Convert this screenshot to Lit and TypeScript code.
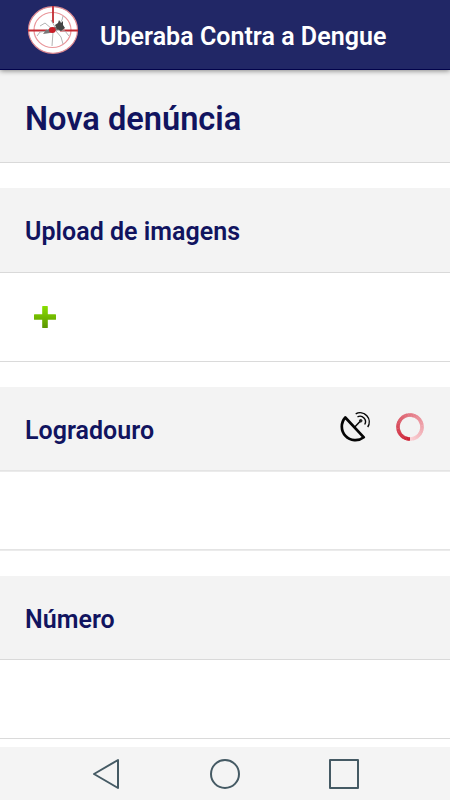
import { LitElement, html, css, svg } from "lit";
import { customElement } from "lit/decorators.js";

const arc = (i: number, n: number) => {
  const start = Math.PI / 2 + (i / n) * 2 * Math.PI;
  const end = start + (2 * Math.PI) / n + (i < n - 1 ? 0.03 : 0);
  const p = (a: number) => `${(15 + 12 * Math.cos(a)).toFixed(2)} ${(15 + 12 * Math.sin(a)).toFixed(2)}`;
  const t = i / (n - 1);
  const mix = (a: number, b: number) => Math.round(a + (b - a) * t);
  return svg`<path d="M${p(start)}A12 12 0 0 1 ${p(end)}" stroke="rgb(${mix(205, 250)},${mix(32, 208)},${mix(52, 212)})"/>`;
};

@customElement("app-root")
export class AppRoot extends LitElement {
  static styles = css`
    :host {
      display: flex;
      flex-direction: column;
      width: 450px;
      height: 800px;
      overflow: hidden;
      background: #fff;
      font-family: Roboto, sans-serif;
      color: #11145f;
    }
    * { box-sizing: border-box; }
    svg { display: block; flex: none; fill: none; overflow: visible; }
    h1, h2, h3 { margin: 0; font-weight: 600; white-space: nowrap; }
    .bar {
      position: relative;
      z-index: 1;
      flex: none;
      height: 70px;
      display: flex;
      padding-left: 27px;
      background: #212766;
      border-bottom: 1px solid #02034b;
      box-shadow: 0 1px 5px rgba(0, 0, 0, 0.45);
      color: #fff;
    }
    .logo { margin-top: 5px; }
    .brand { margin-left: 21px; line-height: 30px; padding-top: 22px; font-size: 25px; letter-spacing: 0.03px; }
    .title {
      flex: none;
      height: 93px;
      padding: 29px 25px 0;
      background: #f3f3f3;
      border-bottom: 1px solid #d9d9d9;
      line-height: 40px;
      font-size: 32.6px;
    }
    .card { flex: none; margin-top: 25px; border-bottom: 1px solid #dadada; }
    .head {
      height: 85px;
      display: flex;
      justify-content: space-between;
      padding: 0 25px;
      background: #f3f3f3;
      border-bottom: 1px solid #d9d9d9;
    }
    .field .head { height: 84px; }
    .head h3 { padding-top: 29px; line-height: 30px; font-size: 25px; letter-spacing: 0.02px; }
    .icons { display: flex; gap: 23px; padding-top: 25px; }
    .body { height: 78px; }
    .split, .split .head { border-bottom-color: #e4e4e4; box-shadow: 0 1px 0 #ebebeb; }
    .images { height: 88px; padding: 32px 0 0 33px; }
    .last { margin-top: 26px; }
    .nav {
      flex: none;
      margin-top: auto;
      height: 53px;
      display: flex;
      justify-content: space-between;
      padding: 10px 90px 0 91px;
      background: #f4f4f4;
    }
  `;

  render() {
    return html`
      <header class="bar">
        <svg class="logo" width="52" height="50" viewBox="0 0 52 50">
          <ellipse cx="26" cy="25" rx="24.5" ry="23.3" fill="#fff" stroke="#dc8890" stroke-width="1.2"/>
          <ellipse cx="25.5" cy="25" rx="18.5" ry="17.5" stroke="#e99599" stroke-width="1.2"/>
          <path d="M26 1v17M1 25.5h19M33 25.5h18" stroke="#c32b32" stroke-width="1.8"/>
          <path d="M25 24 18 18l-5 3M21 26l-8 1-3 4M26 27l-1 14M29 26l5 6 2 7M30 25l8 1 4 5M30 22l5-7 1-4M28 22l-4-7" stroke="#aaa" stroke-width="0.9"/>
          <path d="M16 29 19 25l9-3 7-1-4 4-8 3z" fill="#777"/>
          <path d="m28 20 3-2 1-3 2 3 2-2v4l2 3-4 3-4-2z" fill="#444"/>
          <ellipse cx="25.3" cy="25" rx="3.4" ry="3" fill="#c91e28"/>
        </svg>
        <h1 class="brand">Uberaba Contra a Dengue</h1>
      </header>
      <h2 class="title">Nova denúncia</h2>
      <section class="card">
        <div class="head"><h3>Upload de imagens</h3></div>
        <div class="images">
          <svg width="24" height="24" viewBox="0 0 24 24">
            <defs><linearGradient id="leaf" x1="0" y1="0" x2="0" y2="1">
              <stop stop-color="#89df00"/><stop offset="1" stop-color="#5b9500"/>
            </linearGradient></defs>
            <path d="M9.8 1h4.4q.6 0 .6.6v7.6h7.6q.6 0 .6.6v4.4q0 .6-.6.6h-7.6v7.6q0 .6-.6.6H9.8q-.6 0-.6-.6v-7.6H1.6q-.6 0-.6-.6V9.8q0-.6.6-.6h7.6V1.6q0-.6.6-.6z" fill="url(#leaf)"/>
          </svg>
        </div>
      </section>
      <section class="card field split">
        <div class="head">
          <h3>Logradouro</h3>
          <div class="icons">
            <svg width="32" height="32" viewBox="0 0 32 32" stroke="#050505">
              <path d="M5.3 5.5A13.6 13.6 0 0 0 23.8 25.3Z" stroke-width="2.7" stroke-linejoin="round"/>
              <path d="M14.8 15 20.2 9.2" stroke-width="1.4"/>
              <circle cx="20.7" cy="8.8" r="1.3" fill="#222" stroke="#222"/>
              <path d="M17.5 4.8A5.5 5.5 0 0 1 24.7 12.5M15.7 1.8A9.2 9.2 0 0 1 27.7 15" stroke-width="1.4"/>
            </svg>
            <svg width="30" height="30" viewBox="0 0 30 30" stroke-width="3.6">
              ${Array.from({ length: 48 }, (_, i) => arc(i, 48))}
            </svg>
          </div>
        </div>
        <div class="body"></div>
      </section>
      <section class="card field last">
        <div class="head"><h3>Número</h3></div>
        <div class="body"></div>
      </section>
      <nav class="nav">
        <svg width="30" height="34" viewBox="0 0 30 34" stroke="#455a64" stroke-width="2"><path d="M27 3v28L3 17z" stroke-linejoin="round"/></svg>
        <svg width="32" height="34" viewBox="0 0 32 34" stroke="#455a64" stroke-width="2"><circle cx="16" cy="17" r="14"/></svg>
        <svg width="32" height="34" viewBox="0 0 32 34" stroke="#455a64" stroke-width="2"><path d="M2 3h28v28H2z" stroke-linejoin="round"/></svg>
      </nav>
    `;
  }
}
